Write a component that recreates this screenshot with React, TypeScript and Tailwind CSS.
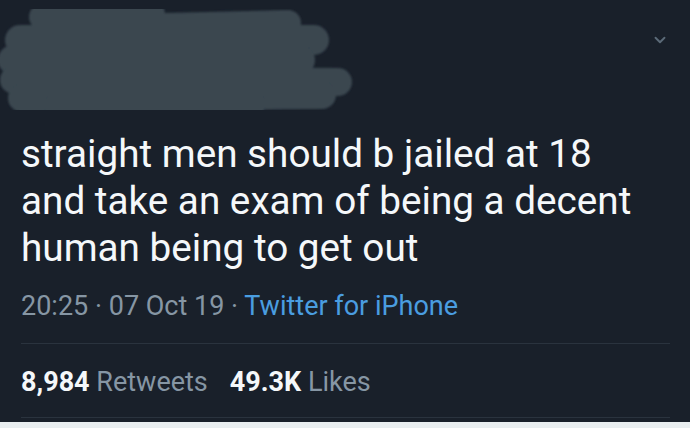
import { ChevronDown } from "lucide-react";

const tweet = {
  text: "straight men should b jailed at 18 and take an exam of being a decent human being to get out",
  time: "20:25",
  date: "07 Oct 19",
  client: "Twitter for iPhone",
  retweets: "8,984",
  likes: "49.3K",
};

// the scribble that hides the name and handle
function Redaction() {
  const strokes = [
    { x1: 42, y1: 17, x2: 152, y2: 14, w: 26 },
    { x1: 165, y1: 26, x2: 288, y2: 23, w: 26 },
    { x1: 20, y1: 40, x2: 314, y2: 40, w: 30 },
    { x1: 13, y1: 60, x2: 300, y2: 60, w: 30 },
    { x1: 14, y1: 80, x2: 338, y2: 82, w: 28 },
    { x1: 22, y1: 98, x2: 322, y2: 95, w: 28 },
    { x1: 55, y1: 105, x2: 255, y2: 104, w: 22 },
  ];
  return (
    <svg width="360" height="125" viewBox="0 0 360 125" className="block shrink-0">
      <defs>
        <filter id="soft" x="-5%" y="-5%" width="110%" height="110%">
          <feGaussianBlur stdDeviation="1.2" />
        </filter>
      </defs>
      <g stroke="#3a4650" strokeLinecap="round" filter="url(#soft)">
        {strokes.map((s, i) => (
          <line key={i} x1={s.x1} y1={s.y1} x2={s.x2} y2={s.y2} strokeWidth={s.w} />
        ))}
      </g>
    </svg>
  );
}

export default function App() {
  return (
    <div
      className="w-[690px] h-[428px] overflow-hidden bg-[#e9eef0]"
      style={{ fontFamily: "Roboto, 'Noto Sans', sans-serif" }}
    >
      <div className="bg-[#19202a] h-[422px]">
        <div className="flex justify-between items-start h-[130px]">
          <Redaction />
          <ChevronDown className="mt-[31px] mr-[21px] text-[#5b6a78]" size={18} strokeWidth={2.5} />
        </div>
        <div className="pl-[21px] pr-[20px]">
          <p className="text-[38.7px] leading-[47px] text-[#f5f8fa] w-[640px]">{tweet.text}</p>
          <div className="mt-[19px] text-[27px] leading-[32px] text-[#8696a4]">
            {tweet.time} · {tweet.date} · <span className="text-[#4a9de0]">{tweet.client}</span>
          </div>
          <div className="mt-[21px] h-px bg-[#2a333e]" />
          <div className="mt-[22px] text-[27px] leading-[32px] text-[#8696a4] flex gap-[22px]">
            <span>
              <span className="font-bold text-[#f5f8fa]">{tweet.retweets}</span> Retweets
            </span>
            <span>
              <span className="font-bold text-[#f5f8fa]">{tweet.likes}</span> Likes
            </span>
          </div>
          <div className="mt-[19px] h-px bg-[#2a333e]" />
        </div>
      </div>
    </div>
  );
}
